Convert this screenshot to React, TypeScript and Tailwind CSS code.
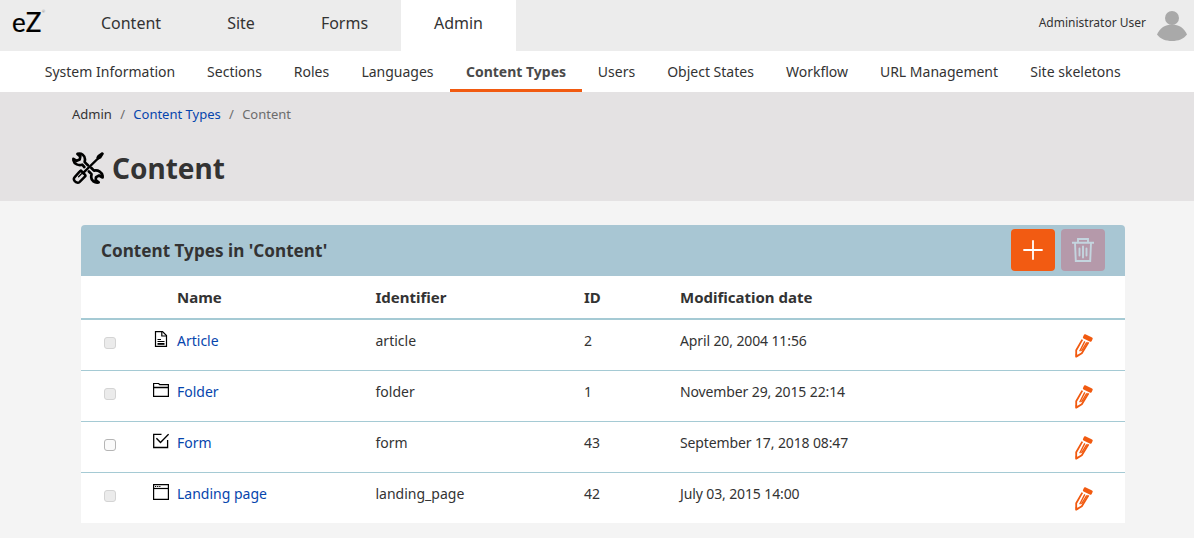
import React from "react";

const mainTabs = [
  { label: "Content", width: "w-[126px]" },
  { label: "Site", width: "w-[94px]" },
  { label: "Forms", width: "w-[113px]" },
  { label: "Admin", width: "w-[115px]", active: true },
];

const subTabs = [
  { label: "System Information", width: "w-[162px]" },
  { label: "Sections", width: "w-[87px]" },
  { label: "Roles", width: "w-[67px]" },
  { label: "Languages", width: "w-[105px]" },
  { label: "Content Types", width: "w-[132px]", active: true },
  { label: "Users", width: "w-[69px]" },
  { label: "Object States", width: "w-[119px]" },
  { label: "Workflow", width: "w-[94px]" },
  { label: "URL Management", width: "w-[150px]" },
  { label: "Site skeletons", width: "w-[123px]" },
];

type Kind = "article" | "folder" | "form" | "landing";

const rows: { name: string; identifier: string; id: number; date: string; kind: Kind; enabled?: boolean }[] = [
  { name: "Article", identifier: "article", id: 2, date: "April 20, 2004 11:56", kind: "article" },
  { name: "Folder", identifier: "folder", id: 1, date: "November 29, 2015 22:14", kind: "folder" },
  { name: "Form", identifier: "form", id: 43, date: "September 17, 2018 08:47", kind: "form", enabled: true },
  { name: "Landing page", identifier: "landing_page", id: 42, date: "July 03, 2015 14:00", kind: "landing" },
];

const grid = "grid grid-cols-[68px_28px_198.5px_208.5px_96px_1fr_61px]";

function TypeIcon({ kind }: { kind: Kind }) {
  return (
    <svg className="block h-4 w-4" viewBox="0 0 16 16" fill="none" stroke="#000" strokeWidth="1.2">
      {kind === "article" && (
        <>
          <path d="M2.5 .6h7l4 4v10.8h-11z" />
          <path d="M8.8 .7v4.3h4.5" />
          <path d="M4.5 8.5h3.5M4.5 10.500h7" />
          <path d="M4.5 12.9h7" strokeWidth="1.8" />
        </>
      )}
      {kind === "folder" && (
        <>
          <path d="M.6 14.4V1.5h5.1l1 1.2h8.7v11.7z" />
          <path d="M.6 5.5h14.8" strokeWidth="1.5" />
        </>
      )}
      {kind === "form" && (
        <>
          <path d="M8.5 1.3H.7v13.2h13.9V7" strokeWidth="1.3" />
          <path d="M3.4 5.2l4.1 4.3L15.6 1.2" strokeWidth="1.4" />
        </>
      )}
      {kind === "landing" && (
        <>
          <path d="M.6 .6h14.8v14.8H.6z" />
          <path d="M.5 4.5h15" />
          <path d="M2 2.5h1.2M4.1 2.5h1.2M6.2 2.5h1.2" />
        </>
      )}
    </svg>
  );
}

function Pencil() {
  return (
    <svg className="block h-6 w-[18px]" viewBox="0 0 18 24" fill="none" stroke="#f15a10">
      <path d="M9.9 1.3L16.6 4.5L15.7 6.7L9 3.5z" fill="#f15a10" strokeWidth="2.2" strokeLinejoin="round" />
      <path d="M7.3 5.6L1.2 16.2v6.400l5.6-3.300L13.500 8.300" strokeWidth="1.8" strokeLinejoin="round" />
      <path d="M9.8 7.4L4.7 17.2M11.800 8.300L6.500 17" strokeWidth="1.4" />
      <path d="M.6 19.8l3 1.6L.6 23.500z" fill="#f15a10" stroke="none" />
    </svg>
  );
}

function Tools() {
  return (
    <svg className="block h-8 w-8" viewBox="0 0 32 32" fill="none" stroke="#000" strokeWidth="2.7" strokeLinejoin="round" strokeLinecap="round">
      <path d="M12.3 15L10.2 12.7C6.5 13.7 2.2 12.2 1.5 8.6L1.4 6.8 4.7 8.8 7.7 7.5 8.3 4.5 5.5 1.9C9.5 .7 13 3.6 13 7.3c0 1.2-.3 2.1-.3 2.8l3.2 3.1" />
      <path d="M19.4 16l2.6 2.6c4.3-.8 8.1 1.6 8.6 5.3l0 1.6-3.5-2-3.1 1.6-.3 3.1 2.9 2.2c-4 .7-7.300-1.7-7.400-5.300 0-1.2.3-2.2.3-3l-2.6-2.6" />
      <path d="M11 21.2L27.5 5" strokeWidth="2.4" />
      <path d="M26.4 3.8L30.3 1.2l.5 .5-2.5 4-1.9 .8-1-.9z" fill="#000" strokeWidth="2" />
      <path d="M8.8 18.5l4.1 4.1c.7 .7 .7 1.4 0 2.1l-5.2 5.1c-1.6 1.5-3.7 .8-4.8-.5-1.2-1.3-1.3-3-.2-4.2l4.9-5.5c.5-.6 .8-.9 1.2-1.1z" strokeWidth="2.5" />
      <path d="M6.6 24.8l2.9-3" strokeWidth="1.3" />
    </svg>
  );
}

export default function App() {
  return (
    <div className="h-[538px] w-[1194px] overflow-hidden whitespace-nowrap bg-[#f4f4f4] font-['Noto_Sans',sans-serif] text-sm text-[#333]">
      <header className="flex h-[51px] bg-[#ececec]">
        <div className="flex w-[68px] items-start pl-3 pt-[7px] font-['Lato',sans-serif] text-[26px] leading-[30px] text-black">
          <span className="tracking-[0.3px] [-webkit-text-stroke:0.2px_#000]">eZ</span>
          <span className="pt-0.5 text-[4px] leading-[6px] text-[#777]">®</span>
        </div>
        <nav className="flex text-base">
          {mainTabs.map((t) => (
            <a key={t.label} className={`flex h-full items-center justify-center pb-[5px] ${t.width} ${t.active ? "bg-white" : ""}`}>
              {t.label}
            </a>
          ))}
        </nav>
        <div className="ml-auto flex items-start pr-[7px]">
          <span className="mr-[11px] pt-[13px] text-[12px] leading-5">Administrator User</span>
          <svg className="mt-[11px] h-[30px] w-[30px]" viewBox="0 0 30 30" fill="#a9a9a9">
            <circle cx="15" cy="7" r="7" />
            <path d="M0 23.5C3 17 8 13.5 15 13.5S27 17 30 23.5C26.5 28 21.5 30 15 30S3.5 28 0 23.5z" />
          </svg>
        </div>
      </header>

      <nav className="flex h-[41px] bg-white pl-[29px]">
        {subTabs.map((t) => (
          <a
            key={t.label}
            className={`flex h-full items-center justify-center ${t.width} ${t.active ? "border-b-[3px] border-[#f15a10] pt-[3px] font-bold text-[#4a4a4a]" : ""}`}
          >
            {t.label}
          </a>
        ))}
      </nav>

      <section className="h-[109px] bg-[#e4e2e3] pl-[72px] pt-3">
        <div className="flex text-[13px] leading-5">
          <span>Admin</span>
          <span className="px-[8.3px] text-[#6c6c6c]">/</span>
          <a className="text-[#0645ad]">Content Types</a>
          <span className="px-[8.3px] text-[#6c6c6c]">/</span>
          <span className="text-[#6c6c6c]">Content</span>
        </div>
        <h1 className="mt-6 flex items-center gap-2 text-[28px] font-bold leading-10">
          <Tools />
          Content
        </h1>
      </section>

      <main className="ml-[81px] mt-6 w-[1044px]">
        <div className="flex h-[51px] items-center rounded-t-[4px] bg-[#a8c6d3] px-5 pb-px">
          <h2 className="pt-[2px] text-[17.15px] font-bold">Content Types in 'Content'</h2>
          <button className="ml-auto flex h-[42px] w-11 items-center justify-center rounded-[4px] bg-[#f25b12]">
            <svg className="h-5 w-5" viewBox="0 0 20 20" stroke="#fff" strokeWidth="1.8" strokeLinecap="round">
              <path d="M1 10h18M10 1v18" />
            </svg>
          </button>
          <button className="ml-1.5 flex h-[42px] w-11 items-center justify-center rounded-[4px] bg-[#b599aa]">
            <svg className="h-6 w-[22px]" viewBox="0 0 22 24" fill="none" stroke="#c4d5df" strokeWidth="1.9">
              <path d="M0 4.8h22M6 4.5V1h10v3.5M3 5l.8 18h14.4L19 5" />
              <path d="M7.5 10.5v7M11 8.5v11M14.5 10.5v7" strokeLinecap="round" />
            </svg>
          </button>
        </div>

        <div className="bg-white">
          <div className={`${grid} h-11 items-center border-b-2 border-[#a5cad4] pt-px text-[15px] font-bold`}>
            <span className="col-start-3">Name</span>
            <span>Identifier</span>
            <span>ID</span>
            <span>Modification date</span>
          </div>
          {rows.map((r, i) => (
            <div key={r.id} className={`${grid} items-start ${i < 3 ? "h-[51px] border-b border-[#a5cad4]" : "h-[50px]"}`}>
              <div className="pl-[23px] pt-[17px]">
                <div
                  role="checkbox"
                  aria-checked={false}
                  className={`h-3 w-3 rounded-[3px] border ${r.enabled ? "border-[#b5b5b5] bg-[#fafafa]" : "border-[#d4d4d4] bg-[#ebebeb]"}`}
                />
              </div>
              <div className="pl-1 pt-[11px]">
                <TypeIcon kind={r.kind} />
              </div>
              <a className="pt-[11px] leading-5 text-[#0645ad]">{r.name}</a>
              <span className="pt-[11px] leading-5">{r.identifier}</span>
              <span className="pt-[11px] leading-5">{r.id}</span>
              <span className="pt-[11px] leading-5 tracking-[-0.12px]">{r.date}</span>
              <div className="pl-[11px] pt-3.5">
                <Pencil />
              </div>
            </div>
          ))}
        </div>
      </main>
    </div>
  );
}
